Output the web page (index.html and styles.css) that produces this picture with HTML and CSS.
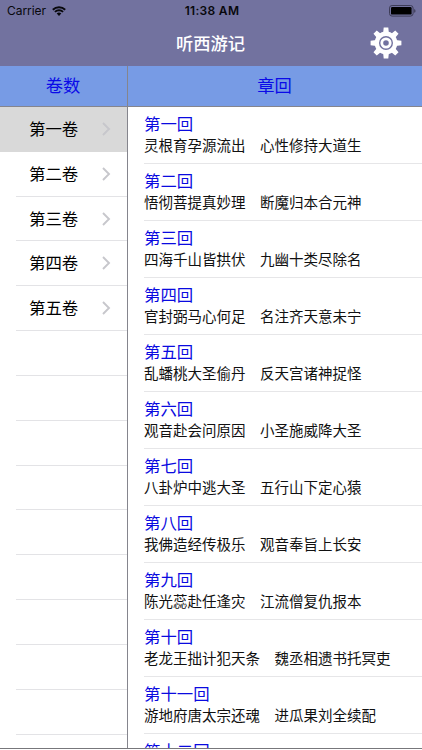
FILE: index.html
```html
<!DOCTYPE html>
<html lang="zh-CN">
<head>
<meta charset="utf-8">
<title>听西游记</title>
<link rel="stylesheet" href="styles.css">
</head>
<body>
<div class="app">
  <header class="top">
    <div class="status">
      <div class="carrier"><span>Carrier</span>
        <svg class="wifi" viewBox="0 0 14 10"><path d="M.8 3.7a9 9 0 0 1 12.4 0M2.9 5.9a6 6 0 0 1 8.2 0" fill="none" stroke="#08080c" stroke-width="1.9"/><path d="M4.7 7.5a3.4 3.4 0 0 1 4.6 0L7 9.9z" fill="#08080c"/></svg>
      </div>
      <div class="time">11:38 AM</div>
      <svg class="battery" viewBox="0 0 28 12"><rect x=".5" y=".5" width="23.6" height="10.6" rx="2.6" fill="none" stroke="#3d3c57"/><rect x="2" y="2" width="20.6" height="7.6" rx="1.2" fill="#000"/><path d="M25.2 4v3.8q1.3-.6 1.3-1.9T25.2 4z" fill="#3d3c57"/></svg>
    </div>
    <div class="nav">
      <h1>听西游记</h1>
      <svg class="gear" viewBox="-16 -16 32 32">
        <g fill="#fff">
          <path id="t" d="M-2.9-9.5-2.3-15.4H2.3L2.9-9.5zM-2.9 9.5-2.3 15.4H2.3L2.9 9.5z"/>
          <use href="#t" transform="rotate(45)"/><use href="#t" transform="rotate(90)"/><use href="#t" transform="rotate(135)"/>
        </g>
        <circle r="9.2" fill="none" stroke="#fff" stroke-width="4.4"/>
        <circle r="4.2" fill="none" stroke="#fff" stroke-width="2.8"/>
      </svg>
    </div>
  </header>
  <div class="heads"><div class="head">卷数</div><div class="head">章回</div></div>
  <main class="panes">
    <ul class="volumes">
      <li class="on">第一卷<svg class="chev" viewBox="0 0 9 14"><path d="M1 1l6 6-6 6"/></svg></li>
      <li>第二卷<svg class="chev" viewBox="0 0 9 14"><path d="M1 1l6 6-6 6"/></svg></li>
      <li>第三卷<svg class="chev" viewBox="0 0 9 14"><path d="M1 1l6 6-6 6"/></svg></li>
      <li>第四卷<svg class="chev" viewBox="0 0 9 14"><path d="M1 1l6 6-6 6"/></svg></li>
      <li>第五卷<svg class="chev" viewBox="0 0 9 14"><path d="M1 1l6 6-6 6"/></svg></li>
      <li></li><li></li><li></li><li></li><li></li><li></li><li></li><li></li><li></li><li></li>
    </ul>
    <ul class="chapters">
      <li><h2>第一回</h2><p>灵根育孕源流出　心性修持大道生</p></li>
      <li><h2>第二回</h2><p>悟彻菩提真妙理　断魔归本合元神</p></li>
      <li><h2>第三回</h2><p>四海千山皆拱伏　九幽十类尽除名</p></li>
      <li><h2>第四回</h2><p>官封弼马心何足　名注齐天意未宁</p></li>
      <li><h2>第五回</h2><p>乱蟠桃大圣偷丹　反天宫诸神捉怪</p></li>
      <li><h2>第六回</h2><p>观音赴会问原因　小圣施威降大圣</p></li>
      <li><h2>第七回</h2><p>八卦炉中逃大圣　五行山下定心猿</p></li>
      <li><h2>第八回</h2><p>我佛造经传极乐　观音奉旨上长安</p></li>
      <li><h2>第九回</h2><p>陈光蕊赴任逢灾　江流僧复仇报本</p></li>
      <li><h2>第十回</h2><p>老龙王拙计犯天条　魏丞相遗书托冥吏</p></li>
      <li><h2>第十一回</h2><p>游地府唐太宗还魂　进瓜果刘全续配</p></li>
      <li><h2>第十二回</h2></li>
    </ul>
  </main>
</div>
</body>
</html>
```
FILE: styles.css
```css
* { box-sizing: border-box; margin: 0; padding: 0; }
body {
  font-family: Inter, "Noto Sans CJK SC", sans-serif;
  background: #fff;
  overflow: hidden;
}
.app { width: 422px; height: 750px; display: flex; flex-direction: column; overflow: hidden; }
.top { height: 66px; background: #72729f; flex: none; }
.status {
  height: 22px;
  display: grid;
  grid-template-columns: 1fr auto 1fr;
  align-items: center;
  padding: 0 5px 0 7px;
  font-size: 12px;
  line-height: 22px;
  color: #08080c;
}
.carrier { display: flex; align-items: center; gap: 6px; letter-spacing: -.05px; }
.wifi { width: 14px; height: 10px; }
.time { font-weight: 600; letter-spacing: .3px; }
.battery { width: 28px; height: 12px; justify-self: end; }
.nav {
  height: 44px;
  display: grid;
  grid-template-columns: 1fr auto 1fr;
  align-items: center;
  padding-right: 20px;
  padding-left: 19px;
}
.nav h1 { grid-column: 2; font-size: 17.3px; line-height: 42px; font-weight: 500; color: #fff; }
.gear { width: 32px; height: 32px; justify-self: end; margin-top: -2px; }
.heads { flex: none; height: 41px; display: grid; grid-template-columns: 128px 1fr; background: #779be5; border-bottom: 1px solid #85858d; }
.head { text-align: center; color: #0a0ae8; font-size: 17.3px; line-height: 40px; padding-right: 1px; }
.head:first-child { border-right: 1px solid #85858d; }
.panes { height: 642px; flex: none; display: grid; grid-template-columns: 128px 1fr; overflow: hidden; border-bottom: 1px solid #77777b; }
.volumes, .chapters { list-style: none; min-height: 0; overflow: hidden; }
.volumes { border-right: 1px solid #85858d; }
.volumes li {
  height: 44.83px;
  margin-left: 16px;
  padding: 0 16px 0 13px;
  display: flex;
  align-items: center;
  justify-content: space-between;
  font-size: 16.4px;
  line-height: 24px;
  color: #000;
  border-bottom: 1px solid #e3e3e6;
}
.volumes .on { margin-left: 0; padding-left: 29px; background: #d9d9d9; border-color: #d9d9d9; }
.chev { width: 9px; height: 14px; fill: none; stroke: #c7c7cc; stroke-width: 1.9; }
.chapters li {
  height: 57.04px;
  margin-left: 16px;
  padding-top: 6px;
  border-bottom: 1px solid #e6e6e8;
  white-space: nowrap;
}
.chapters h2 { font-size: 16.4px; line-height: 22px; font-weight: 400; color: #0a0ae0; }
.chapters p { font-size: 14.5px; line-height: 22px; color: #111; }
```
